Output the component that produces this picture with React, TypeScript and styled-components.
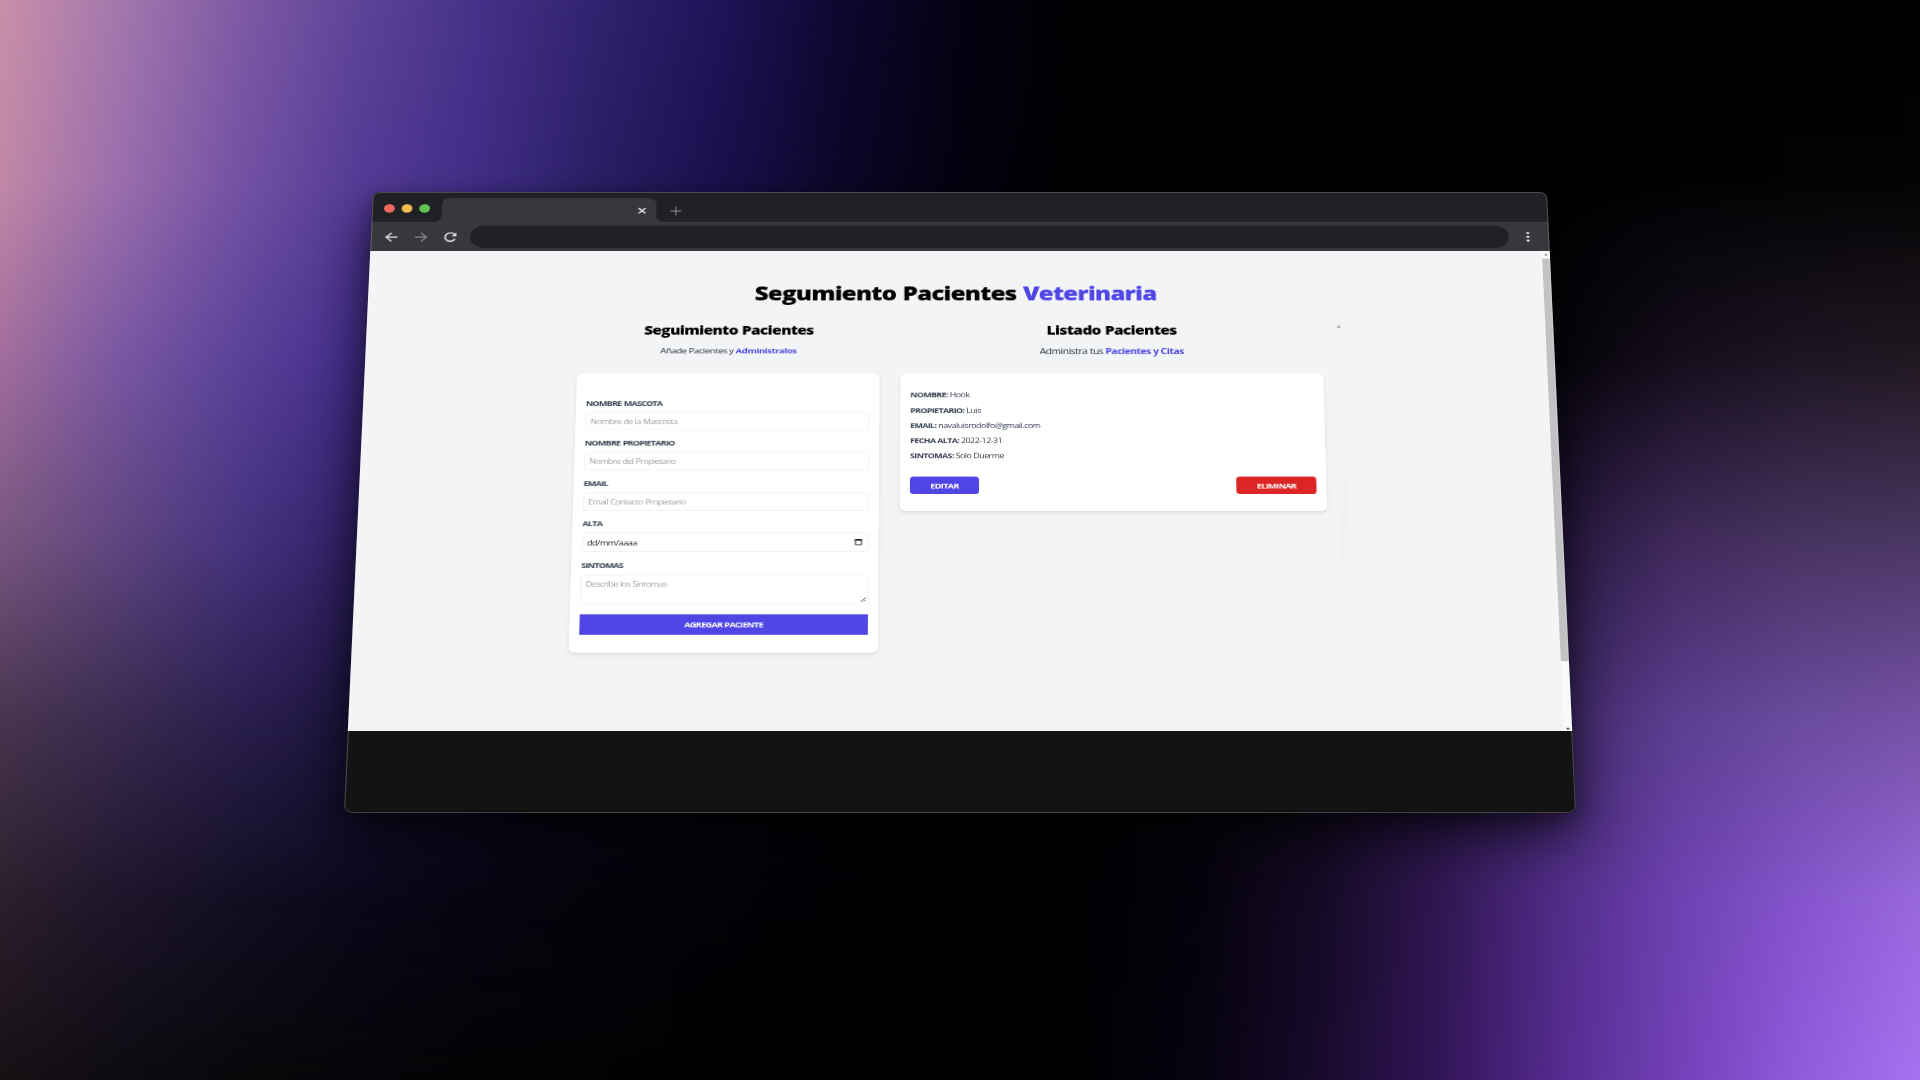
import React from "react";
import styled, { createGlobalStyle } from "styled-components";

const Global = createGlobalStyle`
  * { box-sizing: border-box; margin: 0; padding: 0; }
  html, body { background: #000; overflow: hidden; }
  body { font-family: "Open Sans", "Noto Sans", sans-serif; }
`;

const Stage = styled.div`
  position: relative;
  isolation: isolate;
  width: 1920px;
  height: 1080px;
  overflow: hidden;
  background: #000;
  display: flex;
  justify-content: center;
  padding-top: 192px;
`;

const Band = styled.div<{ $stops: string; $fade: string }>`
  position: absolute;
  inset: 0;
  background: linear-gradient(90deg, ${(p) => p.$stops});
  mask-image: linear-gradient(180deg, ${(p) => p.$fade});
  mix-blend-mode: plus-lighter;
`;

/* Colours of the backdrop, one row per height, sampled every 120px. */
const STEP = 120;
const ROWS: { y: number; colors: string[] }[] = [
  { y: 0, colors: ["#c98fa8", "#a377ad", "#7f5aa4", "#5d4398", "#453189", "#30226e", "#1e1458", "#0d0730", "#040212", "#000001", "#000", "#000", "#000", "#000", "#000", "#000", "#000"] },
  { y: 180, colors: ["#c088a6", "#9b6dac", "#7352a3", "#543a96", "#3f2d86", "#2a1d63", "#190f4c", "#0a0628", "#03010f", "#000", "#000", "#000", "#000", "#000", "#010102", "#020203", "#030304"] },
  { y: 360, colors: ["#a26d9c", "#7857a1", "#5a4199", "#422c8c", "#2a1c66", "#150d44", "#0a0628", "#020010", "#000", "#000", "#000", "#000", "#000", "#050309", "#150e1c", "#1d1523", "#211821"] },
  { y: 540, colors: ["#785680", "#5f4580", "#45337e", "#302069", "#1d1350", "#0e0830", "#060318", "#000008", "#000", "#000", "#000", "#020104", "#110a1e", "#271740", "#3f295a", "#473360", "#4a3663"] },
  { y: 720, colors: ["#48344e", "#392a50", "#291e4d", "#1b123e", "#0e082a", "#070318", "#03010c", "#000004", "#000", "#000", "#020105", "#0c0618", "#241344", "#43296c", "#5b3e90", "#6a4b9e", "#7652a6"] },
  { y: 900, colors: ["#2b1e2c", "#1d152a", "#120e22", "#0a0719", "#060410", "#040309", "#020207", "#000003", "#000", "#010003", "#05020c", "#140a25", "#301650", "#502c88", "#6e41b2", "#8554cc", "#9868dc"] },
  { y: 1080, colors: ["#171014", "#0d0b11", "#080709", "#050508", "#030305", "#020204", "#000001", "#000", "#000", "#010002", "#060310", "#180a2c", "#321558", "#552b90", "#7341b8", "#915add", "#a672f0"] },
];

const Backdrop = () => (
  <>
    {ROWS.map((r, i) => {
      const prev = ROWS[i - 1]?.y;
      const next = ROWS[i + 1]?.y;
      const fade = [
        prev !== undefined ? `transparent ${prev}px` : null,
        `#000 ${r.y}px`,
        next !== undefined ? `transparent ${next}px` : null,
      ].filter(Boolean).join(", ");
      return <Band key={r.y} $fade={fade} $stops={r.colors.map((c, j) => `${c} ${j * STEP}px`).join(", ")} />;
    })}
  </>
);

/* Tilted plane: the top edge recedes, the bottom edge comes forward. */
const Window = styled.div`
  position: relative;
  flex: none;
  width: 1200px;
  height: 776px;
  display: flex;
  flex-direction: column;
  transform-origin: 50% 0;
  transform: matrix3d(0.9783, 0, 0, 0, 0, 0.76233, 0, -0.000060746, 0, 0, 1, 0, 0, 0, 0, 1);
  border-radius: 8px;
  overflow: hidden;
  background: #131314;
  box-shadow: 0 30px 60px rgba(0, 0, 0, 0.6), 0 8px 24px rgba(0, 0, 0, 0.35);
  &::after {
    content: "";
    position: absolute;
    inset: 0;
    border-radius: 8px;
    border: 1px solid rgba(255, 255, 255, 0.22);
    pointer-events: none;
  }
`;

const TabStrip = styled.div`
  height: 40px;
  background: #37383b;
  display: flex;
  border-bottom: 1px solid #3c3d40;
`;

const Lights = styled.div`
  width: 70.5px;
  height: 39px;
  padding: 16px 0 0 11.5px;
  display: flex;
  gap: 7px;
  background: #202124;
  border-radius: 0 0 8px 0;
`;

const Light = styled.span<{ $color: string }>`
  width: 11px;
  height: 11px;
  border-radius: 50%;
  background: ${(p) => p.$color};
`;

const TabSlot = styled.div`
  width: 219px;
  padding-top: 8px;
  background: linear-gradient(#202124 50%, #37383b 50%);
`;

const Tab = styled.div`
  height: 31px;
  border-radius: 8px 8px 0 0;
  background: #37383b;
  display: flex;
  align-items: center;
  justify-content: flex-end;
  padding: 2px 10px 0 0;
`;

const StripRest = styled.div`
  flex: 1;
  display: flex;
  align-items: center;
  padding: 10px 0 0 14px;
  background: #202124;
  border-radius: 0 0 0 8px;
`;

const Toolbar = styled.div`
  height: 37px;
  background: #37383b;
  display: flex;
  align-items: center;
  padding: 0 14px 0 13.6px;
`;

const NavIcons = styled.div`
  width: 87.8px;
  display: flex;
  gap: 16.4px;
`;

const Address = styled.div`
  width: 1058px;
  height: 29.5px;
  border-radius: 15px;
  background: #202124;
`;

const Kebab = styled.div`
  flex: 1;
  padding-left: 12px;
  display: flex;
  flex-direction: column;
  align-items: center;
  gap: 2px;
`;

const KebabDot = styled.span`
  width: 3px;
  height: 3px;
  border-radius: 50%;
  background: #e4e5e8;
`;

const Page = styled.div`
  height: 601px;
  background: #f3f4f6;
  display: flex;
`;

const Content = styled.main`
  width: 787px;
  margin-left: 202px;
  padding-top: 37px;
  display: flex;
  flex-direction: column;
`;

const Title = styled.h1`
  height: 36px;
  line-height: 36px;
  font-size: 24.6px;
  font-weight: 800;
  letter-spacing: -0.86px;
  word-spacing: 1px;
  text-align: center;
  white-space: nowrap;
  color: #000;
`;

const Accent = styled.span`
  color: #4f46e5;
`;

const Strong = styled.span`
  color: #4f46e5;
  font-weight: 700;
`;

const Columns = styled.div`
  flex: 1;
  display: flex;
  margin-top: 13px;
`;

const FormColumn = styled.section`
  width: 304.7px;
  margin-left: 12px;
`;

const ListColumn = styled.section`
  width: 426.4px;
  margin-left: 21.4px;
`;

const Heading = styled.h2`
  height: 22px;
  line-height: 22px;
  padding-top: 5px;
  font-size: 15.6px;
  font-weight: 800;
  letter-spacing: -0.6px;
  word-spacing: 0.5px;
  text-align: center;
  white-space: nowrap;
  color: #000;
`;

const Sub = styled.p<{ $size: number }>`
  height: 16px;
  line-height: 16px;
  margin-top: 13px;
  font-size: ${(p) => p.$size}px;
  letter-spacing: -0.42px;
  text-align: center;
  white-space: nowrap;
  color: #1f2937;
`;

const Card = styled.div<{ $top: number; $bottom: number }>`
  margin-top: 21.4px;
  padding: ${(p) => p.$top}px 10px ${(p) => p.$bottom}px;
  border-radius: 6px;
  background: #fff;
  box-shadow: 0 3px 5px rgba(0, 0, 0, 0.07), 0 1px 2px rgba(0, 0, 0, 0.06);
`;

const Field = styled.div<{ $height: number }>`
  height: ${(p) => p.$height}px;
`;

const Label = styled.label`
  display: block;
  height: 12px;
  line-height: 12px;
  font-size: 9px;
  font-weight: 700;
  letter-spacing: -0.72px;
  word-spacing: 0.6px;
  text-transform: uppercase;
  color: #374151;
`;

const Control = styled.div<{ $height: number; $dark?: boolean }>`
  position: relative;
  height: ${(p) => p.$height}px;
  margin-top: 5px;
  padding: ${(p) => (p.$dark ? 5 : 4)}px ${(p) => (p.$dark ? 5 : 8)}px 0 4px;
  border: 1px solid #f1f2f4;
  border-radius: 3px;
  display: flex;
  justify-content: space-between;
  font-size: 9px;
  letter-spacing: ${(p) => (p.$dark ? -0.45 : -0.6)}px;
  word-spacing: 0.3px;
  line-height: 14px;
  color: ${(p) => (p.$dark ? "#222" : "#a0a3a9")};
`;

const Grip = styled.svg`
  position: absolute;
  right: 1px;
  bottom: 1px;
`;

const Submit = styled.button`
  display: block;
  width: 100%;
  height: 25px;
  border: 0;
  background: #4f46e5;
  color: #fff;
  font: 700 9.1px "Open Sans", "Noto Sans", sans-serif;
  letter-spacing: -0.68px;
  text-transform: uppercase;
`;

const Row = styled.p`
  height: 19.15px;
  line-height: 19.15px;
  font-size: 8.9px;
  letter-spacing: -0.5px;
  white-space: nowrap;
  color: #374151;
`;

const Key = styled.b`
  font-weight: 700;
  letter-spacing: -0.6px;
  text-transform: uppercase;
`;

const Actions = styled.div`
  display: flex;
  justify-content: space-between;
  margin-top: 17px;
`;

const Action = styled.button<{ $width: number; $color: string }>`
  width: ${(p) => p.$width}px;
  height: 22px;
  border: 0;
  border-radius: 4px;
  background: ${(p) => p.$color};
  color: #fff;
  font: 700 9.1px "Open Sans", "Noto Sans", sans-serif;
  letter-spacing: -0.64px;
  text-transform: uppercase;
`;

const InnerTrack = styled.div`
  width: 9px;
  margin: 5px 0 0 12px;
  background: #f1f2f2;
  display: flex;
  justify-content: center;
  padding-top: 2px;
`;

const OuterTrack = styled.div`
  width: 8px;
  margin-left: auto;
  background: #f8f9fa;
  display: flex;
  flex-direction: column;
  align-items: center;
`;

const Thumb = styled.div`
  width: 8px;
  height: 506px;
  margin: 3px 0 auto;
  background: #c1c2c3;
`;

const Arrow = styled.span<{ $down?: boolean }>`
  width: 0;
  height: 0;
  margin: 3px 0 1px;
  border: 2px solid transparent;
  border-top: ${(p) => (p.$down ? "3px solid #505050" : "0")};
  border-bottom: ${(p) => (p.$down ? "0" : "3px solid #999")};
`;

const fields = [
  { label: "Nombre Mascota", text: "Nombre de la Mascosta", h: 50.5 },
  { label: "Nombre Propietario", text: "Nombre del Propietario", h: 50.5 },
  { label: "Email", text: "Email Contacto Propietario", h: 50.5 },
];

const patient = [
  ["Nombre", "Hook"],
  ["Propietario", "Luis"],
  ["Email", "navaluisrodolfo@gmail.com"],
  ["Fecha Alta", "2022-12-31"],
  ["Sintomas", "Solo Duerme"],
];

export default function App() {
  return (
    <Stage>
      <Global />
      <Backdrop />
      <Window>
        <TabStrip>
          <Lights>
            <Light $color="#ee6a5f" />
            <Light $color="#f5bd4f" />
            <Light $color="#61c554" />
          </Lights>
          <TabSlot>
            <Tab>
              <svg width="9" height="9" viewBox="0 0 9 9" stroke="#e8e9eb" strokeWidth="1.7">
                <path d="M1 1l7 7M8 1l-7 7" />
              </svg>
            </Tab>
          </TabSlot>
          <StripRest>
            <svg width="12" height="12" viewBox="0 0 12 12" stroke="#77787c" strokeWidth="1.4">
              <path d="M6 .5v11M.5 6h11" />
            </svg>
          </StripRest>
        </TabStrip>
        <Toolbar>
          <NavIcons>
            <svg width="14" height="14" viewBox="0 0 14 14" fill="none" stroke="#e0e1e4" strokeWidth="1.6">
              <path d="M13 7H2M7 1.5L1.5 7 7 12.5" />
            </svg>
            <svg width="14" height="14" viewBox="0 0 14 14" fill="none" stroke="#85868a" strokeWidth="1.5">
              <path d="M1 7h11M7 1.5L12.5 7 7 12.5" />
            </svg>
            <svg width="14" height="14" viewBox="0 0 14 14" fill="none" stroke="#e0e1e4" strokeWidth="1.7">
              <path d="M11.8 9.2A5.4 5.4 0 1 1 11 3.4" />
              <path d="M13 1v5H8z" fill="#e0e1e4" stroke="none" />
            </svg>
          </NavIcons>
          <Address />
          <Kebab>
            <KebabDot />
            <KebabDot />
            <KebabDot />
          </Kebab>
        </Toolbar>
        <Page>
          <Content>
            <Title>
              Segumiento Pacientes <Accent>Veterinaria</Accent>
            </Title>
            <Columns>
              <FormColumn>
                <Heading>Seguimiento Pacientes</Heading>
                <Sub $size={9.6}>
                  Añade Pacientes y <Strong>Administralos</Strong>
                </Sub>
                <Card $top={31.5} $bottom={21.5}>
                  {fields.map((f) => (
                    <Field key={f.label} $height={f.h}>
                      <Label>{f.label}</Label>
                      <Control $height={23}>{f.text}</Control>
                    </Field>
                  ))}
                  <Field $height={52}>
                    <Label>Alta</Label>
                    <Control $height={24} $dark>
                      dd/mm/aaaa
                      <svg width="8" height="10" viewBox="0 0 8 10" fill="none" stroke="#222">
                        <path d="M1 3h6v6H1z" />
                        <path d="M.5 3h7" strokeWidth="2" />
                      </svg>
                    </Control>
                  </Field>
                  <Field $height={66}>
                    <Label>Sintomas</Label>
                    <Control $height={36}>
                      Describe los Sintomas
                      <Grip width="6" height="6" viewBox="0 0 6 6" stroke="#444" strokeWidth=".9">
                        <path d="M.5 5.5l5-5M3.2 5.5l2.3-2.3" />
                      </Grip>
                    </Control>
                  </Field>
                  <Submit>Agregar Paciente</Submit>
                </Card>
              </FormColumn>
              <ListColumn>
                <Heading>Listado Pacientes</Heading>
                <Sub $size={10.3}>
                  Administra tus <Strong>Pacientes y Citas</Strong>
                </Sub>
                <Card $top={17} $bottom={20.5}>
                  {patient.map(([k, v]) => (
                    <Row key={k}>
                      <Key>{k}:</Key> {v}
                    </Row>
                  ))}
                  <Actions>
                    <Action $width={69} $color="#4f46e5">Editar</Action>
                    <Action $width={80.5} $color="#dc2626">Eliminar</Action>
                  </Actions>
                </Card>
              </ListColumn>
              <InnerTrack>
                <Arrow />
              </InnerTrack>
            </Columns>
          </Content>
          <OuterTrack>
            <Arrow />
            <Thumb />
            <Arrow $down />
          </OuterTrack>
        </Page>
      </Window>
    </Stage>
  );
}
